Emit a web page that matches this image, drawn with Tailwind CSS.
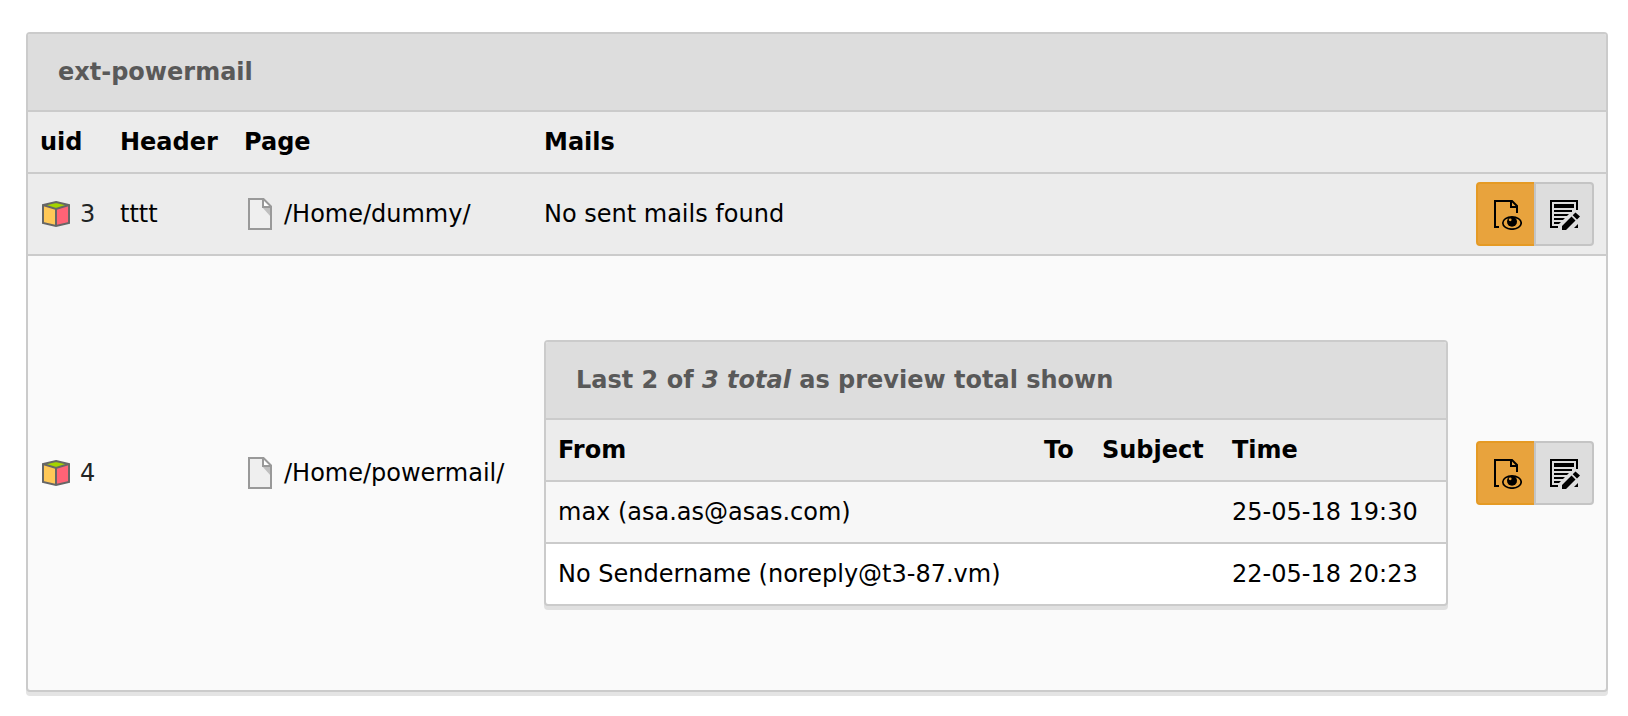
<!DOCTYPE html>
<html lang="en">
<head>
<meta charset="utf-8">
<meta name="viewport" content="width=device-width, initial-scale=1">
<title>ext-powermail</title>
<script src="https://cdn.jsdelivr.net/npm/@tailwindcss/browser@4"></script>
</head>
<body class="bg-white pt-8 pb-5 pl-[26px] pr-5 font-[Verdana,'DejaVu_Sans',sans-serif] text-2xl leading-9 text-black">

<svg class="hidden" aria-hidden="true">
  <symbol id="plugin" viewBox="0 0 32 32">
    <path d="M3 7L16 11V28L3 25Z" fill="#ffc857"/>
    <path d="M29 7L16 11V28L29 25Z" fill="#ff6376"/>
    <path d="M16 4L29 7L16 11L3 7Z" fill="#a4d400"/>
    <path d="M16 4L29 7V25L16 28L3 25V7ZM3 7L16 11L29 7M16 11V28" fill="none" stroke="#666" stroke-width="2"/>
  </symbol>
  <symbol id="page" viewBox="0 0 32 32">
    <path d="M5 1H19.5L27 8.5V31H5Z" fill="#efefef"/>
    <path d="M19 1L27 9H19Z" fill="#fff"/>
    <path d="M18 9H27V19Z" fill="#bfbfbf"/>
    <path d="M5 1H19.5L27 8.5V31H5ZM19 1V9H27" fill="none" stroke="#999" stroke-width="2"/>
  </symbol>
  <symbol id="view" viewBox="0 0 32 32">
    <path d="M9 29H5V3H22L27 8V15M21 3V9H27" fill="none" stroke="#000" stroke-width="2"/>
    <ellipse cx="22" cy="25" rx="9.2" ry="6.2" fill="none" stroke="#000" stroke-width="1.7"/>
    <circle cx="22" cy="23.8" r="5"/>
    <circle cx="20.2" cy="21.8" r="1.4" fill="#e8a33d"/>
  </symbol>
  <symbol id="edit" viewBox="0 0 32 32">
    <path d="M10 29H3V3H29V12" fill="none" stroke="#000" stroke-width="2"/>
    <path d="M6 6H26V10H6ZM6 12H24V14H6ZM6 16H21L19 18H6ZM6 20H17L15 22H6ZM6 24H13L11 26H6ZM30 26V30H26Z"/>
    <path d="M14 32V28L23.5 18.5L27.5 22.5L18 32ZM24.7 17.3L27.5 14.5L32 18.5L29 21.6Z"/>
  </symbol>
</svg>

<main class="overflow-hidden rounded border-2 border-[#cbcbcb] bg-[#fafafa] shadow-[0_4px_0_#e4e4e4]">
  <h1 class="bg-[#ddd] px-[30px] py-5 font-bold text-[#595959]">ext-powermail</h1>
  <table class="w-full table-fixed border-separate border-spacing-0 text-left">
    <colgroup><col class="w-20"><col class="w-[124px]"><col class="w-[300px]"><col><col class="w-[146px]"></colgroup>
    <thead class="bg-[#ececec]">
      <tr>
        <th scope="col" class="border-t-2 border-[#cbcbcb] p-3">uid</th>
        <th scope="col" class="border-t-2 border-[#cbcbcb] p-3">Header</th>
        <th scope="col" class="border-t-2 border-[#cbcbcb] p-3">Page</th>
        <th scope="col" class="border-t-2 border-[#cbcbcb] p-3">Mails</th>
        <td class="border-t-2 border-[#cbcbcb] p-3"></td>
      </tr>
    </thead>
    <tbody>
      <tr class="bg-[#ececec]">
        <td class="border-t-2 border-[#cbcbcb] pl-3"><div class="flex items-center gap-2"><svg class="size-8 shrink-0" aria-hidden="true"><use href="#plugin"/></svg><span class="text-[#212424]">3</span></div></td>
        <td class="border-t-2 border-[#cbcbcb] px-3">tttt</td>
        <td class="border-t-2 border-[#cbcbcb] px-3"><div class="flex items-center gap-2"><svg class="size-8 shrink-0" aria-hidden="true"><use href="#page"/></svg>/Home/dummy/</div></td>
        <td class="border-t-2 border-[#cbcbcb] px-3">No sent mails found</td>
        <td class="border-t-2 border-[#cbcbcb] py-2 pr-3">
          <div class="flex justify-end">
            <button type="button" aria-label="View page" class="flex h-16 w-15 items-center justify-center rounded-l border-2 border-[#e59a24] bg-[#e8a33d]"><svg class="size-8" aria-hidden="true"><use href="#view"/></svg></button>
            <button type="button" aria-label="Edit form" class="-ml-0.5 flex h-16 w-15 items-center justify-center rounded-r border-2 border-[#c4c4c4] bg-[#ddd]"><svg class="size-8" aria-hidden="true"><use href="#edit"/></svg></button>
          </div>
        </td>
      </tr>
      <tr>
        <td class="border-t-2 border-[#cbcbcb] pl-3"><div class="flex items-center gap-2"><svg class="size-8 shrink-0" aria-hidden="true"><use href="#plugin"/></svg><span class="text-[#212424]">4</span></div></td>
        <td class="border-t-2 border-[#cbcbcb] px-3"></td>
        <td class="border-t-2 border-[#cbcbcb] px-3"><div class="flex items-center gap-2"><svg class="size-8 shrink-0" aria-hidden="true"><use href="#page"/></svg>/Home/powermail/</div></td>
        <td class="border-t-2 border-[#cbcbcb] px-3 py-21">
          <section class="overflow-hidden rounded border-2 border-[#cbcbcb] bg-white shadow-[0_4px_0_#e0e0e0]">
            <h2 class="bg-[#ddd] px-[30px] py-5 font-bold text-[#595959]">Last 2 of <em>3 total</em> as preview total shown</h2>
            <table class="w-full table-fixed border-separate border-spacing-0 text-left">
              <colgroup><col><col class="w-[58px]"><col class="w-[130px]"><col class="w-[226px]"></colgroup>
              <thead class="bg-[#ececec]">
                <tr>
                  <th scope="col" class="border-t-2 border-[#cbcbcb] p-3">From</th>
                  <th scope="col" class="border-t-2 border-[#cbcbcb] p-3">To</th>
                  <th scope="col" class="border-t-2 border-[#cbcbcb] p-3">Subject</th>
                  <th scope="col" class="border-t-2 border-[#cbcbcb] p-3">Time</th>
                </tr>
              </thead>
              <tbody>
                <tr class="bg-[#f7f7f7]">
                  <td class="border-t-2 border-[#cbcbcb] p-3">max (asa.as@asas.com)</td>
                  <td class="border-t-2 border-[#cbcbcb] p-3"></td>
                  <td class="border-t-2 border-[#cbcbcb] p-3"></td>
                  <td class="border-t-2 border-[#cbcbcb] p-3 whitespace-nowrap">25-05-18 19:30</td>
                </tr>
                <tr>
                  <td class="border-t-2 border-[#cbcbcb] p-3">No Sendername (noreply@t3-87.vm)</td>
                  <td class="border-t-2 border-[#cbcbcb] p-3"></td>
                  <td class="border-t-2 border-[#cbcbcb] p-3"></td>
                  <td class="border-t-2 border-[#cbcbcb] p-3 whitespace-nowrap">22-05-18 20:23</td>
                </tr>
              </tbody>
            </table>
          </section>
        </td>
        <td class="border-t-2 border-[#cbcbcb] py-2 pr-3">
          <div class="flex justify-end">
            <button type="button" aria-label="View page" class="flex h-16 w-15 items-center justify-center rounded-l border-2 border-[#e59a24] bg-[#e8a33d]"><svg class="size-8" aria-hidden="true"><use href="#view"/></svg></button>
            <button type="button" aria-label="Edit form" class="-ml-0.5 flex h-16 w-15 items-center justify-center rounded-r border-2 border-[#c4c4c4] bg-[#ddd]"><svg class="size-8" aria-hidden="true"><use href="#edit"/></svg></button>
          </div>
        </td>
      </tr>
    </tbody>
  </table>
</main>
</body>
</html>
